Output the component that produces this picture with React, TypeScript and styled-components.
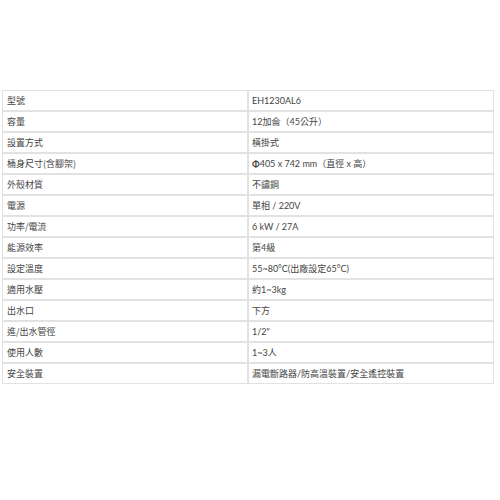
import React from "react";
import styled, { createGlobalStyle } from "styled-components";

const Global = createGlobalStyle`
  html, body { margin: 0; padding: 0; background: #fff; }
  body { font-family: "Noto Sans CJK TC", "Noto Sans", sans-serif; }
`;

const Page = styled.div`
  padding: 90px 6px 0 2px;
`;

const Table = styled.table`
  width: 492px;
  border-collapse: separate;
  border-spacing: 0;
  table-layout: fixed;
`;

const Cell = styled.td<{ $first?: boolean }>`
  height: 21px;
  box-sizing: border-box;
  padding: 0 0 0 ${(p) => (p.$first ? "4px" : "3px")};
  width: ${(p) => (p.$first ? "246px" : "auto")};
  border: 1px solid #e2e2e2;
  font-family: ${(p) =>
    p.$first
      ? `"Noto Sans CJK TC", sans-serif`
      : `"Lato", "Noto Sans CJK TC", sans-serif`};
  font-size: 9px;
  line-height: 19px;
  color: #444;
  white-space: nowrap;
  vertical-align: middle;
`;

const Phi = styled.b`
  font-weight: 700;
`;

const rows: [string, React.ReactNode][] = [
  ["型號", "EH1230AL6"],
  ["容量", "12加侖（45公升）"],
  ["設置方式", "橫掛式"],
  ["桶身尺寸(含腳架)", <><Phi>Φ</Phi>405 x 742 mm（直徑 x 高）</>],
  ["外殼材質", "不鏽鋼"],
  ["電源", "單相 / 220V"],
  ["功率/電流", "6 kW / 27A"],
  ["能源效率", "第4級"],
  ["設定溫度", "55~80°C(出廠設定65°C)"],
  ["適用水壓", "約1~3kg"],
  ["出水口", "下方"],
  ["進/出水管徑", "1/2\""],
  ["使用人數", "1~3人"],
  ["安全裝置", "漏電斷路器/防高溫裝置/安全遙控裝置"],
];

export default function App() {
  return (
    <Page>
      <Global />
      <Table>
        <tbody>
          {rows.map(([k, v]) => (
            <tr key={k}>
              <Cell $first>{k}</Cell>
              <Cell>{v}</Cell>
            </tr>
          ))}
        </tbody>
      </Table>
    </Page>
  );
}
